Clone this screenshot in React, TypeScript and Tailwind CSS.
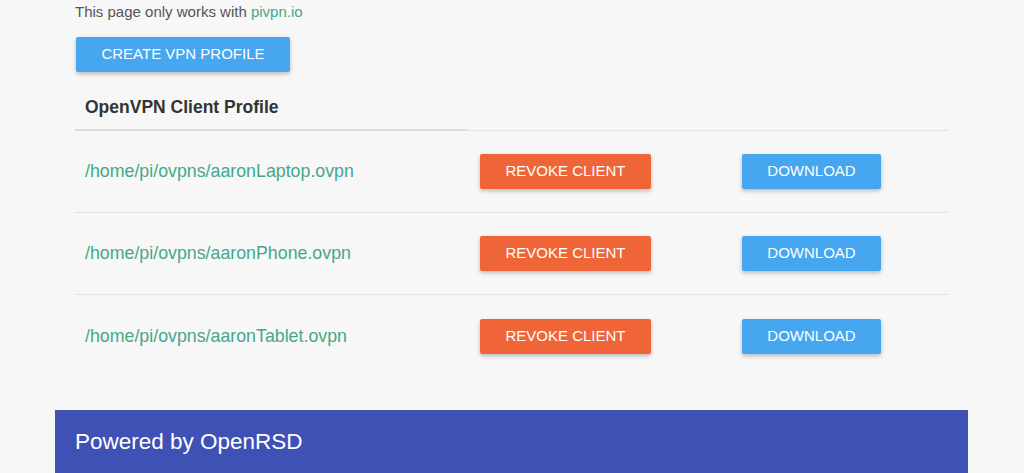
type Client = {
  path: string;
};

const clients: Client[] = [
  { path: "/home/pi/ovpns/aaronLaptop.ovpn" },
  { path: "/home/pi/ovpns/aaronPhone.ovpn" },
  { path: "/home/pi/ovpns/aaronTablet.ovpn" },
];

export default function App() {
  return (
    <div className="h-[473px] overflow-hidden bg-[#f7f7f7] font-['Liberation_Sans',Arial,sans-serif]">
      <div className="ml-[55px] w-[913px]">
        {/* Main content */}
        <main className="px-[20px] pt-[3px]">
          <p className="text-[15px] leading-[18px] text-[#555]">
            This page only works with{" "}
            <a className="text-[#45a88a]">pivpn.io</a>
          </p>

          <button className="ml-px mt-[16px] flex h-[35px] w-[214px] items-center justify-center rounded-[2px] bg-[#46a6ef] text-[15px] text-white shadow-[0_2px_4px_rgba(0,0,0,0.25)]">
            CREATE VPN PROFILE
          </button>

          {/* Client table */}
          <div className="mt-[10px]">
            <div className="flex items-end">
              <div className="w-[393px] border-b-2 border-[#dedede] pl-[10px] pt-[15px] pb-[12px] text-[17.5px] font-bold leading-[20px] text-[#333]">
                OpenVPN Client Profile
              </div>
              <div className="flex-1 border-b border-[#e3e3e3]" />
            </div>

            {clients.map((client, i) => (
              <div
                key={client.path}
                className={`flex h-[82px] items-center ${
                  i < clients.length - 1 ? "border-b border-[#e3e3e3]" : ""
                }`}
              >
                <div className="w-[393px] pl-[10px] text-[17.8px] text-[#45a88a]">
                  {client.path}
                </div>
                <button className="ml-[12px] flex h-[35px] w-[171px] items-center justify-center rounded-[2px] bg-[#ef6538] text-[15px] text-white shadow-[0_2px_4px_rgba(0,0,0,0.25)]">
                  REVOKE CLIENT
                </button>
                <button className="ml-[91px] flex h-[35px] w-[139px] items-center justify-center rounded-[2px] bg-[#46a6ef] text-[15px] text-white shadow-[0_2px_4px_rgba(0,0,0,0.25)]">
                  DOWNLOAD
                </button>
              </div>
            ))}
          </div>
        </main>

        {/* Footer */}
        <footer className="mt-[33px] h-[63px] bg-[#3f51b5] px-[20px] pt-[20px]">
          <p className="text-[22.5px] leading-[24px] text-white">
            Powered by OpenRSD
          </p>
        </footer>
      </div>
    </div>
  );
}
